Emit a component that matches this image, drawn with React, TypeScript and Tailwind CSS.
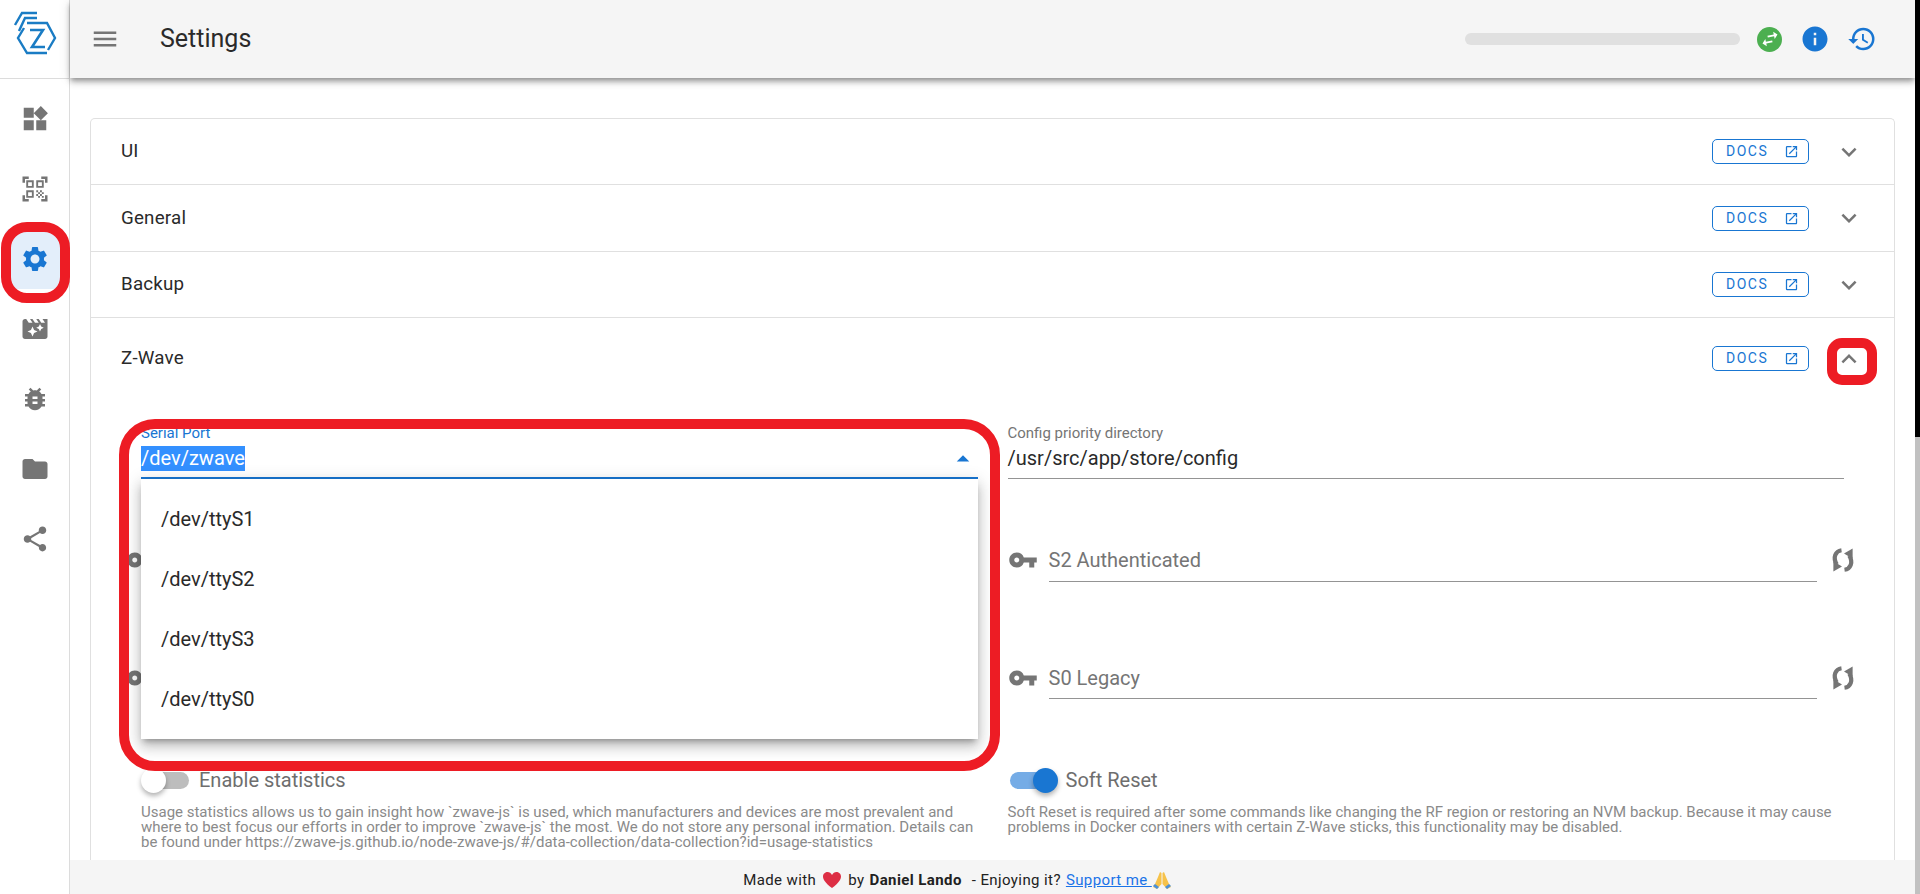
import React from 'react';
import {
  MdArrowDropUp,
  MdBugReport,
  MdExpandLess,
  MdExpandMore,
  MdFolder,
  MdHistory,
  MdInfo,
  MdMenu,
  MdMovieFilter,
  MdOpenInNew,
  MdQrCodeScanner,
  MdSettings,
  MdShare,
  MdSwapHoriz,
  MdVpnKey,
  MdWidgets,
} from 'react-icons/md';

const navItems = [
  { icon: MdWidgets, active: false },
  { icon: MdQrCodeScanner, active: false },
  { icon: MdSettings, active: true },
  { icon: MdMovieFilter, active: false },
  { icon: MdBugReport, active: false },
  { icon: MdFolder, active: false },
  { icon: MdShare, active: false },
];

const ports = ['/dev/ttyS1', '/dev/ttyS2', '/dev/ttyS3', '/dev/ttyS0'];

const Logo = () => (
  <svg width="48" height="48" viewBox="0 0 48 48" fill="none" stroke="#1a7cc4" strokeWidth="2.4">
    <path d="M13 17 L 7 27 L 16 42 L 36 42" />
    <path d="M16 12 L 36 12 L 44 27 L 37 39" />
    <path d="M4 14 L 11 2 L 26 2" />
    <path d="M8 20 L 14 7 L 26 7" />
    <path d="M19 19 L 32 19 L 21 36 L 34 36" strokeWidth="2.6" />
  </svg>
);

const SyncIcon = () => (
  <svg width="30" height="30" viewBox="0 0 24 24" className="shrink-0 text-[#757575]" fill="currentColor">
    <g>
      <path d="M13.2 19.8 C 18 19.2 20.4 14 17 8.5" fill="none" stroke="currentColor" strokeWidth="3.4" />
      <path d="M12.8 6.8 L 19.7 2.8 L 19.7 11 Z" />
    </g>
    <g transform="rotate(180 12 12)">
      <path d="M13.2 19.8 C 18 19.2 20.4 14 17 8.5" fill="none" stroke="currentColor" strokeWidth="3.4" />
      <path d="M12.8 6.8 L 19.7 2.8 L 19.7 11 Z" />
    </g>
  </svg>
);

const DocsButton = () => (
  <div className="flex h-[25px] w-[97px] items-center rounded-[5px] border border-[#1976d2] pl-[13px] text-[#1976d2]">
    <span className="w-[58px] pb-[1px] text-[14px] leading-none tracking-[1.5px]">DOCS</span>
    <MdOpenInNew size={15} />
  </div>
);

const PanelRow = ({ title, height }: { title: string; height: string }) => (
  <div className={`flex items-center border-b border-[#e0e0e0] pr-[30px] pl-[30px] ${height}`}>
    <span className="flex-1 text-[18.75px] leading-none tracking-[0.2px] text-[#2a2a2a]">{title}</span>
    <DocsButton />
    <MdExpandMore size={30} className="ml-[25px] text-[#757575]" />
  </div>
);

const KeyField = ({ label, rowClass, fieldClass }: { label: string; rowClass: string; fieldClass: string }) => (
  <div className={`flex items-start ${rowClass}`}>
    <MdVpnKey size={30} className="mt-[10px] shrink-0 text-[#757575]" />
    <div className={`ml-[11px] flex-1 border-b border-[#949494] pt-[13px] text-[20px] leading-[24px] text-[#757575] ${fieldClass}`}>
      {label}
    </div>
    <div className="mt-[10px] ml-[11px] -mr-[14px]">
      <SyncIcon />
    </div>
  </div>
);

const Switch = ({ on, label }: { on: boolean; label: string }) => (
  <div className="flex h-[25px] items-center">
    <div className="relative h-[25px] w-[50px] shrink-0">
      <div className={`absolute top-[4px] left-[2px] h-[17px] w-[46px] rounded-full ${on ? 'bg-[#75ace6]' : 'bg-[#bdbdbd]'}`} />
      <div
        className={`absolute top-0 h-[25px] w-[25px] rounded-full shadow-[0_3px_5px_rgba(0,0,0,0.3)] ${
          on ? 'left-[25px] bg-[#1976d2]' : 'left-0 bg-white'
        }`}
      />
    </div>
    <span className="ml-[8px] pb-[2px] text-[20px] leading-none text-[#6e6e6e]">{label}</span>
  </div>
);

const App = () => {
  return (
    <div className="relative flex h-[894px] w-[1920px] overflow-hidden bg-white font-[family-name:Roboto,sans-serif]">
      <aside className="flex w-[70px] shrink-0 flex-col border-r border-[#dcdcdc] bg-white">
        <div className="flex h-[79px] items-start justify-center border-b border-[#dcdcdc] pt-[11px]">
          <Logo />
        </div>
        <nav className="flex flex-col items-center gap-[10px] pt-[10px]">
          {navItems.map((item, i) => {
            const Icon = item.icon;
            return (
              <div
                key={i}
                className={`flex h-[60px] w-[60px] items-center justify-center rounded-[5px] ${
                  item.active ? 'bg-[#e3eefa] text-[#1976d2]' : 'text-[#757575]'
                }`}
              >
                <Icon size={30} />
              </div>
            );
          })}
        </nav>
      </aside>

      <div className="flex min-w-0 flex-1 flex-col">
        <header className="relative z-10 flex h-[78px] shrink-0 items-center bg-[#f5f5f5] pr-[38px] pl-[20px] shadow-[0_3px_5px_-1px_rgba(0,0,0,0.3),0_5px_6px_rgba(0,0,0,0.14),0_1px_12px_rgba(0,0,0,0.12)]">
          <MdMenu size={30} className="text-[#757575]" />
          <h1 className="ml-[40px] flex-1 pb-[2px] text-[25px] leading-none text-[#2a2a2a]">Settings</h1>
          <div className="h-[12px] w-[275px] rounded-full bg-[#e0e0e0]" />
          <div className="ml-[17px] flex h-[25px] w-[25px] items-center justify-center rounded-full bg-[#4caf50] text-white">
            <MdSwapHoriz size={22} className="-rotate-12" />
          </div>
          <MdInfo size={30} className="ml-[18px] text-[#1976d2]" />
          <MdHistory size={30} className="ml-[17px] text-[#1976d2]" />
        </header>

        <main className="min-h-0 flex-1 overflow-hidden px-[20px] pt-[40px]">
          <div className="rounded-t-[5px] border border-b-0 border-[#e0e0e0] bg-white">
            <PanelRow title="UI" height="h-[66px]" />
            <PanelRow title="General" height="h-[67px]" />
            <PanelRow title="Backup" height="h-[66px]" />
            <div className="flex h-[81px] items-center pr-[30px] pl-[30px]">
              <span className="flex-1 text-[18.75px] leading-none tracking-[0.2px] text-[#2a2a2a]">Z-Wave</span>
              <DocsButton />
              <MdExpandLess size={30} className="ml-[25px] text-[#757575]" />
            </div>

            <div className="grid h-[500px] grid-cols-2 content-start gap-x-[30px] px-[50px] pt-[25px]">
              <div className="relative">
                <div className="h-[55px] border-b-2 border-[#1976d2]">
                  <div className="text-[15px] leading-[18px] text-[#1976d2]">Serial Port</div>
                  <div className="mt-[4px] flex items-center justify-between">
                    <span className="bg-[#3390ff] text-[20px] leading-[25px] text-white">/dev/zwave</span>
                    <MdArrowDropUp size={30} className="-my-[3px] text-[#1976d2]" />
                  </div>
                </div>
                <div className="absolute top-[55px] left-0 z-20 flex h-[260px] w-full flex-col bg-white py-[10px] shadow-[0_5px_6px_-3px_rgba(0,0,0,0.3),0_8px_12px_1px_rgba(0,0,0,0.14),0_3px_16px_2px_rgba(0,0,0,0.12)]">
                  {ports.map((port) => (
                    <div key={port} className="flex h-[60px] items-center pb-[1px] pl-[20px] text-[20px] text-[#2a2a2a]">
                      {port}
                    </div>
                  ))}
                </div>
              </div>
              <div>
                <div className="h-[55px] border-b border-[#949494]">
                  <div className="text-[15px] leading-[18px] text-[#757575]">Config priority directory</div>
                  <div className="mt-[4px] text-[20px] leading-[25px] text-[#2a2a2a]">/usr/src/app/store/config</div>
                </div>
              </div>

              {/* only the key icons of the left column show next to the open menu */}
              <div className="mt-[56px] -ml-[15px] h-[47px]">
                <MdVpnKey size={30} className="mt-[10px] text-[#757575]" />
              </div>
              <KeyField label="S2 Authenticated" rowClass="mt-[56px]" fieldClass="h-[47px]" />
              <div className="mt-[71px] -ml-[15px] h-[46px]">
                <MdVpnKey size={30} className="mt-[10px] text-[#757575]" />
              </div>
              <KeyField label="S0 Legacy" rowClass="mt-[71px]" fieldClass="h-[46px]" />

              <div className="mt-[69px]">
                <Switch on={false} label="Enable statistics" />
                <p className="mt-[12px] text-[15px] leading-[15px] text-[#8a8a8a]">
                  Usage statistics allows us to gain insight how `zwave-js` is used, which manufacturers and devices are most prevalent and where to best focus our efforts in order to improve `zwave-js` the most. We do not store any personal information. Details can be found under https://zwave-js.github.io/node-zwave-js/#/data-collection/data-collection?id=usage-statistics
                </p>
              </div>
              <div className="mt-[69px]">
                <Switch on label="Soft Reset" />
                <p className="mt-[12px] text-[15px] leading-[15px] text-[#8a8a8a]">
                  Soft Reset is required after some commands like changing the RF region or restoring an NVM backup. Because it may cause problems in Docker containers with certain Z-Wave sticks, this functionality may be disabled.
                </p>
              </div>
            </div>
          </div>
        </main>

        <footer className="relative z-10 flex h-[34px] shrink-0 items-center justify-center bg-[#f5f5f5] pt-[6px] pr-[70px] text-[15px] tracking-[0.4px] text-[#212121]">
          <span>Made with</span>
          <svg width="20" height="18" viewBox="0 0 20 18" className="mx-[6px]">
            <path d="M10 17 C 3 12 1 8 1 5.5 C 1 2.5 3.5 1 5.5 1 C 7.5 1 9 2 10 4 C 11 2 12.5 1 14.5 1 C 16.5 1 19 2.5 19 5.5 C 19 8 17 12 10 17 Z" fill="#dd2e44" />
          </svg>
          <span>by</span>
          <span className="ml-[5px] font-bold">Daniel Lando</span>
          <span className="ml-[10px]">- Enjoying it?</span>
          <a className="ml-[5px] flex items-center text-[#1a73e8] underline">
            Support me&nbsp;
            <svg width="20" height="20" viewBox="0 0 20 20">
              <path d="M9.5 3 L 8 2 L 6 7 L 3 14 L 1 17 L 5 19 L 9.5 14 Z" fill="#f6c24a" />
              <path d="M10.5 3 L 12 2 L 14 7 L 17 14 L 19 17 L 15 19 L 10.5 14 Z" fill="#f6c24a" />
              <path d="M1 16 L 5 19 L 7 17 L 3 14 Z M19 16 L 15 19 L 13 17 L 17 14 Z" fill="#4a90d9" />
            </svg>
          </a>
        </footer>
      </div>

      <div className="flex w-[5px] shrink-0 flex-col">
        <div className="h-[437px] bg-black" />
        <div className="flex-1 bg-[#c1c1c1]" />
      </div>

      {/* red annotations drawn over the screenshot */}
      <div className="absolute top-[222px] left-[1px] z-30 h-[81px] w-[69px] rounded-[26px] border-[10px] border-[#ed1c24]" />
      <div className="absolute top-[338px] left-[1827px] z-30 h-[47px] w-[50px] rounded-[15px] border-[10px] border-[#ed1c24]" />
      <div className="absolute top-[419px] left-[119px] z-30 h-[352px] w-[881px] rounded-[36px] border-[10px] border-[#ed1c24]" />
    </div>
  );
};

export default App;
